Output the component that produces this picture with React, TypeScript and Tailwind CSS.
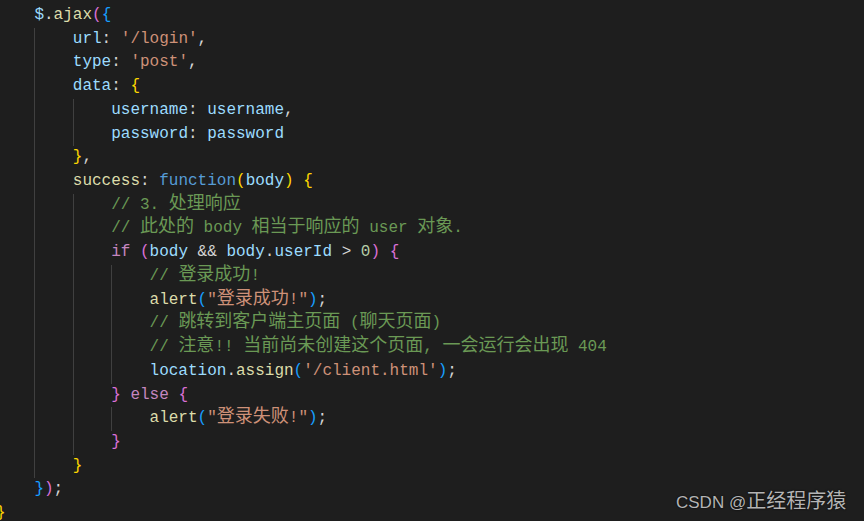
import React from "react";

type Tok = [string, string];

const V = "#9cdcfe";
const P = "#d4d4d4";
const S = "#ce9178";
const C = "#6a9955";
const F = "#dcdcaa";
const K = "#569cd6";
const CT = "#c586c0";
const N = "#b5cea8";
const GOLD = "#ffd700";
const ORC = "#da70d6";
const BLU = "#179fff";

type Line = { indent: number; guides: number[]; toks: Tok[] };

const lines: Line[] = [
  { indent: 1, guides: [], toks: [["$", V], [".", P], ["ajax", F], ["(", ORC], ["{", BLU]] },
  { indent: 2, guides: [1], toks: [["url", V], [": ", P], ["'/login'", S], [",", P]] },
  { indent: 2, guides: [1], toks: [["type", V], [": ", P], ["'post'", S], [",", P]] },
  { indent: 2, guides: [1], toks: [["data", V], [": ", P], ["{", GOLD]] },
  { indent: 3, guides: [1, 2], toks: [["username", V], [": ", P], ["username", V], [",", P]] },
  { indent: 3, guides: [1, 2], toks: [["password", V], [": ", P], ["password", V]] },
  { indent: 2, guides: [1], toks: [["}", GOLD], [",", P]] },
  { indent: 2, guides: [1], toks: [["success", F], [": ", P], ["function", K], ["(", GOLD], ["body", V], [")", GOLD], [" ", P], ["{", GOLD]] },
  { indent: 3, guides: [1, 2], toks: [["// 3. 处理响应", C]] },
  { indent: 3, guides: [1, 2], toks: [["// 此处的 body 相当于响应的 user 对象.", C]] },
  { indent: 3, guides: [1, 2], toks: [["if", CT], [" ", P], ["(", ORC], ["body", V], [" && ", P], ["body", V], [".", P], ["userId", V], [" > ", P], ["0", N], [")", ORC], [" ", P], ["{", ORC]] },
  { indent: 4, guides: [1, 2, 3], toks: [["// 登录成功!", C]] },
  { indent: 4, guides: [1, 2, 3], toks: [["alert", F], ["(", BLU], ['"登录成功!"', S], [")", BLU], [";", P]] },
  { indent: 4, guides: [1, 2, 3], toks: [["// 跳转到客户端主页面 (聊天页面)", C]] },
  { indent: 4, guides: [1, 2, 3], toks: [["// 注意!! 当前尚未创建这个页面, 一会运行会出现 404", C]] },
  { indent: 4, guides: [1, 2, 3], toks: [["location", V], [".", P], ["assign", F], ["(", BLU], ["'/client.html'", S], [")", BLU], [";", P]] },
  { indent: 3, guides: [1, 2], toks: [["}", ORC], [" ", P], ["else", CT], [" ", P], ["{", ORC]] },
  { indent: 4, guides: [1, 2, 3], toks: [["alert", F], ["(", BLU], ['"登录失败!"', S], [")", BLU], [";", P]] },
  { indent: 3, guides: [1, 2], toks: [["}", ORC]] },
  { indent: 2, guides: [1], toks: [["}", GOLD]] },
  { indent: 1, guides: [], toks: [["}", BLU], [")", ORC], [";", P]] },
  { indent: 0, guides: [], toks: [["}", GOLD]] },
];

function withCjk(text: string) {
  return text.split(/([\u3000-\u9fff\uff00-\uffef]+)/).map((part, i) =>
    /[\u3000-\u9fff\uff00-\uffef]/.test(part) ? (
      <span key={i} className="text-[18px] leading-none">{part}</span>
    ) : (
      part
    )
  );
}

function CodeLine({ line }: { line: Line }) {
  return (
    <div className="flex h-[23.72px] items-center">
      {Array.from({ length: line.indent }).map((_, i) => (
        <span
          key={i}
          className={
            line.guides.includes(i)
              ? "w-[38.4px] shrink-0 self-stretch border-l border-[#404040]"
              : "w-[38.4px] shrink-0 self-stretch"
          }
        />
      ))}
      <span className="whitespace-pre">
        {line.toks.map(([t, c], i) => (
          <span key={i} style={{ color: c }}>
            {withCjk(t)}
          </span>
        ))}
      </span>
    </div>
  );
}

export default function App() {
  return (
    <div className="relative w-[864px] h-[521px] overflow-hidden bg-[#1e1e1e]">
      <div className="ml-[-4px] pt-[4px] font-['Liberation_Mono','Noto_Sans_CJK_SC',monospace] text-[16px] leading-[23.72px]">
        {lines.map((l, i) => (
          <CodeLine key={i} line={l} />
        ))}
      </div>
      <div className="absolute left-[676px] top-[486px] font-['Liberation_Sans','Noto_Sans_CJK_SC',sans-serif] text-[17px] text-[#b4b4b4] [text-shadow:0_0_2px_#000]">
        CSDN @<span className="text-[20px]">正经程序猿</span>
      </div>
    </div>
  );
}
